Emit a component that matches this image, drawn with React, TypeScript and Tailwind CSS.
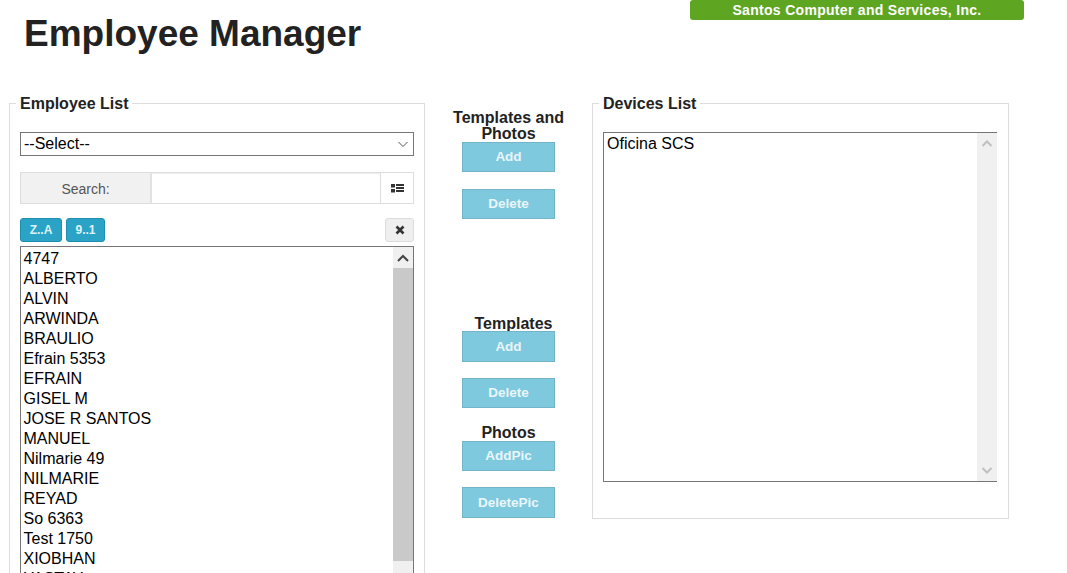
import React from "react";

const names = ["4747","ALBERTO","ALVIN","ARWINDA","BRAULIO","Efrain 5353","EFRAIN","GISEL M","JOSE R SANTOS","MANUEL","Nilmarie 49","NILMARIE","REYAD","So 6363","Test 1750","XIOBHAN","YASTAY"];

function MidButton({ label, className }: { label: string; className: string }) {
  return (
    <button className={`w-[93px] pt-[1px] bg-[#7fc9df] border border-[#74b4c8] text-[#e9f6fa] text-[13.5px] font-bold flex items-center justify-center ${className}`}>
      {label}
    </button>
  );
}

function Heading({ children, className }: { children: React.ReactNode; className: string }) {
  return <div className={`text-[16px] leading-[16px] font-bold text-[#222222] text-center ${className}`}>{children}</div>;
}

export default function App() {
  return (
    <div className="h-[573px] w-[1067px] overflow-hidden bg-white font-['Liberation_Sans',Arial,sans-serif]">
      <header className="flex justify-between h-[103px] pl-[24px] pr-[43px]">
        <h1 className="mt-[14px] text-[37px] leading-[40px] font-bold text-[#222222]">Employee Manager</h1>
        <div className="w-[334px] h-[20px] bg-[#5ea522] rounded-[3px] text-white text-[14px] leading-[20px] font-bold text-center tracking-[0.3px]">
          Santos Computer and Services, Inc.
        </div>
      </header>

      <main className="flex items-start pl-[9px]">
        <section className="relative w-[416px] h-[600px] border border-[#dddddd] px-[10px] pt-[28px]">
          <div className="absolute left-[6px] top-[-10px] bg-white px-[4px] text-[16px] leading-[20px] font-bold text-[#222222]">Employee List</div>

          <div className="h-[24px] border border-[#767676] flex items-center justify-between pl-[3px] pr-[5px] text-[16px] text-black">
            <span>--Select--</span>
            <svg width="10" height="10" viewBox="0 0 10 10" fill="none" stroke="#555555" strokeWidth="1">
              <path d="M0.5 3 L5 7.5 L9.5 3" />
            </svg>
          </div>

          <div className="mt-[16px] h-[32px] flex border border-[#dddddd]">
            <div className="w-[131px] pt-[2px] bg-[#f1f1f1] border-r-2 border-[#e2e2e2] flex items-center justify-center text-[14px] text-[#555555]">Search:</div>
            <div className="flex-1 bg-white shadow-[inset_0_1px_1px_rgba(0,0,0,0.075)]"></div>
            <div className="w-[33px] bg-white border-l border-[#dddddd] flex items-center justify-center">
              <svg width="13" height="9" viewBox="0 0 13 9" fill="#333333">
                <rect x="0" y="0" width="4" height="3.5" />
                <rect x="0" y="5" width="4" height="3.5" />
                <rect x="5" y="0" width="8" height="2" />
                <rect x="5" y="3" width="8" height="2" />
                <rect x="5" y="6" width="8" height="2" />
              </svg>
            </div>
          </div>

          <div className="mt-[14px] h-[24px] flex items-center gap-[4px]">
            <button className="w-[42px] h-[24px] bg-[#2aa3c6] border border-[#1f8fb0] rounded-[3px] text-[#dff3f9] text-[12px] font-bold">Z..A</button>
            <button className="w-[39px] h-[24px] bg-[#2aa3c6] border border-[#1f8fb0] rounded-[3px] text-[#dff3f9] text-[12px] font-bold">9..1</button>
            <button className="ml-auto w-[29px] h-[24px] bg-[#efefef] border border-[#dddddd] rounded-[3px] flex items-center justify-center">
              <svg width="10" height="10" viewBox="0 0 10 10" stroke="#333333" strokeWidth="2.6">
                <path d="M1.5 1.5 L8.5 8.5 M8.5 1.5 L1.5 8.5" />
              </svg>
            </button>
          </div>

          <div className="mt-[4px] h-[400px] border border-[#767676] flex">
            <div className="flex-1 pl-[2.5px] pt-[2px] text-[16px] leading-[20px] text-black">
              {names.map((n, i) => (
                <div key={i} className="h-[20px]">{n}</div>
              ))}
            </div>
            <div className="w-[20px] bg-[#f0f0f0] flex flex-col">
              <div className="h-[21px] flex items-center justify-center">
                <svg width="12" height="8" viewBox="0 0 12 8" fill="none" stroke="#444444" strokeWidth="2">
                  <path d="M1 7 L6 2 L11 7" />
                </svg>
              </div>
              <div className="h-[293px] bg-[#c9c9c9]"></div>
            </div>
          </div>
        </section>

        <div className="w-[167px] flex flex-col items-center">
          <Heading className="mt-[7px] w-[120px]">Templates and Photos</Heading>
          <MidButton label="Add" className="h-[30px]" />
          <MidButton label="Delete" className="h-[30px] mt-[17px]" />
          <Heading className="mt-[97px] ml-[10px]">Templates</Heading>
          <MidButton label="Add" className="h-[31px] mt-[-1px]" />
          <MidButton label="Delete" className="h-[30px] mt-[16px]" />
          <Heading className="mt-[17px]">Photos</Heading>
          <MidButton label="AddPic" className="h-[30px]" />
          <MidButton label="DeletePic" className="h-[31px] mt-[16px]" />
        </div>

        <section className="relative w-[417px] h-[416px] border border-[#dddddd] pl-[10px] pr-[11px] pt-[28px]">
          <div className="absolute left-[6px] top-[-10px] bg-white px-[4px] text-[16px] leading-[20px] font-bold text-[#222222]">Devices List</div>
          <div className="h-[350px] border-t border-l border-b border-[#767676] flex">
            <div className="flex-1 pl-[3px] pt-[1px] text-[16px] leading-[20px] text-black">Oficina SCS</div>
            <div className="w-[20px] bg-[#f0f0f0] flex flex-col justify-between py-[7px] items-center">
              <svg width="10" height="7" viewBox="0 0 10 7" fill="none" stroke="#c0c0c0" strokeWidth="2">
                <path d="M0.5 6 L5 1.5 L9.5 6" />
              </svg>
              <svg width="10" height="7" viewBox="0 0 10 7" fill="none" stroke="#c0c0c0" strokeWidth="2">
                <path d="M0.5 1 L5 5.5 L9.5 1" />
              </svg>
            </div>
          </div>
        </section>
      </main>
    </div>
  );
}
